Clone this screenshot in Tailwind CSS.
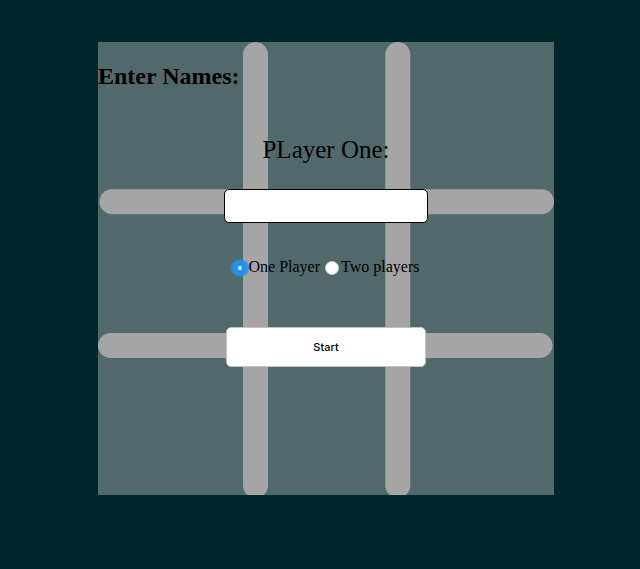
<!DOCTYPE html>
<html lang="en">
<head>
<meta charset="utf-8">
<meta name="viewport" content="width=device-width, initial-scale=1">
<title>Tic Tac Toe</title>
<script src="https://cdn.jsdelivr.net/npm/@tailwindcss/browser@4"></script>
</head>
<body class="min-h-screen bg-[#01272c] pt-[42px] pr-[86px] pb-[74px] pl-[98px] font-['Liberation_Serif',serif] text-black">
<main class="relative isolate overflow-hidden bg-[#51696b] pt-5 pb-32">
  <!-- board lines behind the form -->
  <svg class="absolute inset-0 -z-10 h-full w-full" viewBox="0 0 456 453" preserveAspectRatio="none" fill="#a5a5a5" aria-hidden="true">
    <rect x="145" y="0" width="25" height="456" rx="12.5"/>
    <rect x="287.3" y="0" width="25" height="456" rx="12.5"/>
    <rect x="1.5" y="147.2" width="454.5" height="25" rx="12.5"/>
    <rect x="0" y="291" width="454.5" height="25" rx="12.5"/>
  </svg>
  <h2 class="text-2xl/7 font-bold">Enter Names:</h2>
  <form class="flex flex-col items-center pt-[46px]">
    <label for="player-one" class="text-[25px]/7">PLayer One:</label>
    <input id="player-one" type="text" class="mt-[25px] h-[34px] w-[204px] rounded-[5px] border border-black bg-white px-2 text-base outline-none">
    <div class="mt-[34px] flex items-center gap-[5px] text-base/5">
      <label class="flex items-center gap-0.5">
        <input type="radio" name="players" checked class="mt-0.5 size-3.5 appearance-none rounded-full bg-white checked:border-5 checked:border-[#1a94fb] checked:ring-2 checked:ring-[#2b8fe0]/75">One Player</label>
      <label class="flex items-center gap-0.5">
        <input type="radio" name="players" class="mt-0.5 size-3.5 appearance-none rounded-full border border-[#c8cccc] bg-white checked:border-5 checked:border-[#1a94fb]">Two players</label>
    </div>
    <button type="button" class="mt-[50px] h-10 w-[200px] rounded-[5px] border border-[#c4c4c4] bg-white font-['Inter',sans-serif] text-[11px] font-medium">Start</button>
  </form>
</main>
</body>
</html>
